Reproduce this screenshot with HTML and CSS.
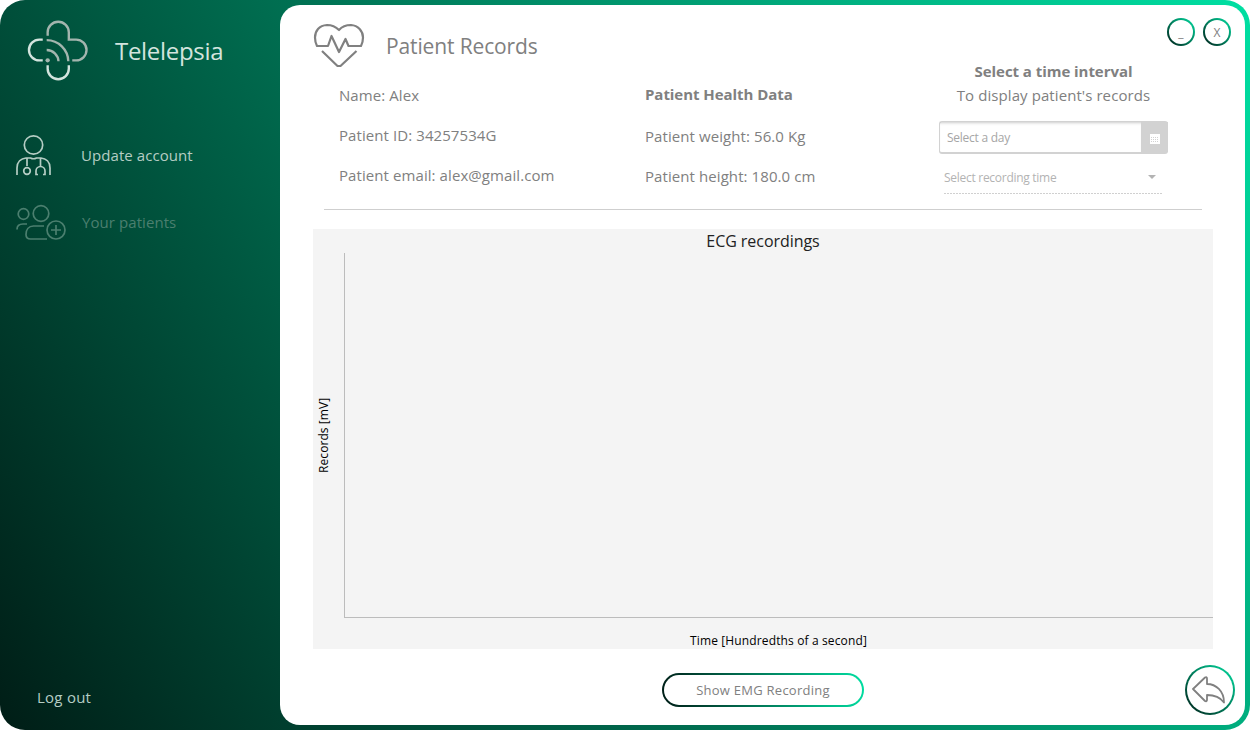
FILE: index.html
```html
<!DOCTYPE html>
<html lang="en">
<head>
<meta charset="utf-8">
<title>Telelepsia</title>
<link rel="stylesheet" href="styles.css">
</head>
<body>
<div class="window">
  <aside class="sidebar">
    <div class="brand">
      <svg class="logo" width="61" height="61" viewBox="0 0 62 62" fill="none" stroke-width="2.400">
        <g stroke="#a3b5ae"><path d="M21 16V12.500a10.700 10.700 0 0 1 21.500 0V20h7.500a10.500 10.500 0 0 1 0 21H46"/><path d="M20 20.500a22 22 0 0 1 22 21.500M20 30.500A12 12 0 0 1 32 42"/></g>
        <g stroke="#d3e4de"><path d="M16 20H12.500a10.500 10.500 0 0 0 0 21H16M21 46v3.500a10.700 10.700 0 0 0 21.500 0V46"/></g>
        <circle cx="21" cy="41" r="2.200" fill="#a3b5ae"/>
      </svg>
      <span class="brand-name">Telelepsia</span>
    </div>
    <nav class="menu">
      <a class="menu-item">
        <svg width="50" height="44" viewBox="0 0 50 44" fill="none" stroke="#b5cdc4" stroke-width="1.700">
          <circle cx="18.500" cy="11" r="9.200"/>
          <path d="M2 41V34c0-6 4-9.500 9-10h4.500c2 1 4 1 6 0H26c5 .5 9 4 9 10v7M12 24v8M25.500 24v8M23 40.500h-2V37a4.500 4.500 0 0 1 9 0v3.500h-2"/>
          <circle cx="12" cy="37" r="3.300"/>
        </svg>
        <span class="menu-label">Update account</span>
      </a>
      <a class="menu-item dim">
        <svg width="51" height="37" viewBox="0 0 51 37" fill="none" stroke="#4b7f6f" stroke-width="1.700">
          <circle cx="8.500" cy="10" r="5.300"/><circle cx="26" cy="9.500" r="7.800"/>
          <path d="M2 25.500c0-4 3-5.500 6-5.500h4M29 22H18.500c-5 0-7.500 4-7.500 8.500 0 3.500 1.500 4.500 4.500 4.500H32"/>
          <circle cx="41" cy="26" r="9"/><path d="M41 21v10M36 26h10"/>
        </svg>
        <span class="menu-label">Your patients</span>
      </a>
    </nav>
    <a class="logout">Log out</a>
  </aside>

  <main class="panel">
    <header class="header">
      <svg class="heart" width="52" height="46" viewBox="0 0 52 46" fill="none" stroke="#808080" stroke-width="2.200" stroke-linejoin="round">
        <path d="M26 8C22 4 18.500 3 14 3 6 3.500 2 9 2 15.500c0 3 .5 5.500 2 8.500h11L18.500 14 26 30l6.500-13 3 7H48c1.500-3 2-5.500 2-8.500C50 9 45 3.500 38 3c-5 0-8.500 1-12 5z"/>
        <path d="M9 29l15.500 15h3L43.500 29"/>
      </svg>
      <h1 class="title">Patient Records</h1>
      <div class="window-buttons">
        <button class="round">_</button>
        <button class="round">X</button>
      </div>
    </header>

    <section class="details">
      <div class="column">
        <p>Name: Alex</p>
        <p>Patient ID: 34257534G</p>
        <p>Patient email: alex@gmail.com</p>
      </div>
      <div class="column health">
        <p class="bold">Patient Health Data</p>
        <p>Patient weight: 56.0 Kg</p>
        <p>Patient height: 180.0 cm</p>
      </div>
      <div class="interval">
        <p class="bold">Select a time interval</p>
        <p>To display patient's records</p>
        <div class="date">
          <span class="date-text">Select a day</span>
          <span class="date-button">
            <svg width="10" height="10" viewBox="0 0 10 10"><path fill="#fff" d="M0 0h10v10H0z"/><path d="M1 3.500h8M1 5.500h8M1 7.500h8" stroke="#d2d2d2" stroke-dasharray="1 1"/></svg>
          </span>
        </div>
        <div class="combo">
          <span>Select recording time</span>
          <svg width="8" height="4" viewBox="0 0 8 4"><path d="M0 0h8L4 4z" fill="#b3b3b3"/></svg>
        </div>
        <svg width="219" height="1" class="dashes"><path d="M0 .5h219" stroke="#d0d0d0" stroke-dasharray="2 1"/></svg>
      </div>
    </section>

    <section class="chart">
      <h2 class="chart-title">ECG recordings</h2>
      <div class="plot-row">
        <span class="y-label">Records [mV]</span>
        <div class="plot"></div>
      </div>
      <span class="x-label">Time [Hundredths of a second]</span>
    </section>

    <footer class="footer">
      <button class="pill">Show EMG Recording</button>
      <button class="back">
        <svg width="36" height="32" viewBox="0 0 36 32" fill="none" stroke="#808080" stroke-width="1.800" stroke-linejoin="round">
          <path d="M1 15 13 3.500q2-1 2 1V10C24 10 32 17 32 28.500c-4-5.500-9-7.500-17-7.500V26q-.5 2-2 1z"/>
        </svg>
      </button>
    </footer>
  </main>
</div>
</body>
</html>
```
FILE: styles.css
```css
* { box-sizing: border-box; margin: 0; padding: 0; }
body { width: 1250px; height: 730px; overflow: hidden; background: #fff; font-family: "Open Sans", "Noto Sans", sans-serif; color: #808080; }
button { font: inherit; color: inherit; cursor: pointer; }
svg { display: block; flex: none; }
.window { display: flex; width: 1250px; height: 730px; padding: 5px 5px 5px 0; border-radius: 25px; background: linear-gradient(59.7deg, #001d16, #00dfa2); }
.sidebar { display: flex; flex-direction: column; width: 280px; padding: 15px 0 0; }
.brand { display: flex; align-items: center; height: 62px; padding-left: 27px; color: #d3e4de; }
.logo { margin-top: -1px; }
.brand-name { margin: -2px 0 0 27px; font-size: 24px; letter-spacing: -.3px; white-space: nowrap; }
.menu { display: flex; flex-direction: column; padding: 52px 0 0 15px; }
.menu-item { display: flex; align-items: center; height: 44px; gap: 16px; font-size: 15px; letter-spacing: .07px; color: #b5cdc4; white-space: nowrap; }
.menu-item.dim { height: 37px; margin-top: 26px; color: #4b7f6f; }
.menu-label { margin-top: -2px; }
.logout { margin: auto 0 15px 37px; line-height: 26px; font-size: 15px; letter-spacing: .25px; color: #b5cdc4; }
.panel { display: flex; flex-direction: column; width: 965px; height: 720px; border-radius: 20px; background: #fff; }
.header { display: flex; height: 76px; padding: 17px 14px 0 33px; }
.title { margin: 7px 0 0 21px; line-height: 34px; font-size: 21px; letter-spacing: -.13px; font-weight: 400; white-space: nowrap; }
.window-buttons { display: flex; gap: 8px; margin: -4px 0 0 auto; }
.round, .pill, .back { display: flex; align-items: center; justify-content: center; border: 2px solid transparent; background: linear-gradient(#fff, #fff) padding-box, linear-gradient(to top right, #001d16, #00dfa2) border-box; }
.round { width: 28px; height: 28px; border-radius: 50%; font-size: 12px; }
.details { display: flex; height: 129px; margin: 0 43px 0 44px; padding-left: 15px; border-bottom: 1px solid #cfcfcf; font-size: 15px; letter-spacing: .08px; }
.column { width: 306px; margin-top: -1px; }
.column p { height: 40px; line-height: 30px; white-space: nowrap; }
.column.health { width: 294px; }
.health .bold { margin: -1px 0 2px; }
.bold { font-weight: 700; letter-spacing: -.05px; }
.interval { width: 229px; margin-top: -22px; text-align: center; white-space: nowrap; }
.interval p { height: 24px; line-height: 24px; }
.date { display: flex; width: 229px; height: 33px; margin-top: 14px; border: 2px solid #d2d2d2; border-width: 1px 0 2px 1px; border-radius: 3px; font-size: 12px; letter-spacing: -.25px; color: #a6a6a6; }
.date-text { flex: 1; padding-left: 7px; text-align: left; line-height: 32px; box-shadow: inset 0 3px 3px -2px #ccc; }
.date-button { display: flex; align-items: center; justify-content: center; width: 27px; padding: 3px 0 0 1px; background: #d2d2d2; }
.combo { display: flex; align-items: center; justify-content: space-between; width: 219px; height: 30px; margin: 8px 0 0 5px; padding: 0 7px 0 0; font-size: 12px; letter-spacing: -.28px; color: #b3b3b3; }
.dashes { margin: 1px 0 0 5px; }
.chart { display: flex; flex-direction: column; width: 900px; height: 420px; margin: 19px 0 0 33px; background: #f4f4f4; color: #222; }
.chart-title { height: 24px; line-height: 25px; text-align: center; font-size: 16px; letter-spacing: -.05px; font-weight: 400; }
.plot-row { display: flex; flex: none; height: 365px; }
.y-label { width: 22px; margin-right: 9px; line-height: 22px; writing-mode: vertical-rl; transform: rotate(180deg); text-align: center; font-size: 12px; letter-spacing: .08px; color: #000; white-space: nowrap; }
.plot { flex: 1; border: 1px solid #bcbcbc; border-width: 0 0 1px 1px; }
.x-label { flex: none; margin: 14px 0 0 31px; line-height: 17px; text-align: center; font-size: 12px; letter-spacing: .13px; color: #000; }
.footer { display: flex; flex: 1; padding: 16px 10px 0 382px; justify-content: space-between; align-items: flex-start; }
.pill { width: 202px; height: 34px; margin-top: 8px; border-radius: 17px; background: linear-gradient(#fff, #fff) padding-box, linear-gradient(80deg, #001d16, #00dfa2) border-box; font-size: 13px; letter-spacing: .25px; }
.back { width: 50px; height: 50px; border-radius: 50%; }
```
